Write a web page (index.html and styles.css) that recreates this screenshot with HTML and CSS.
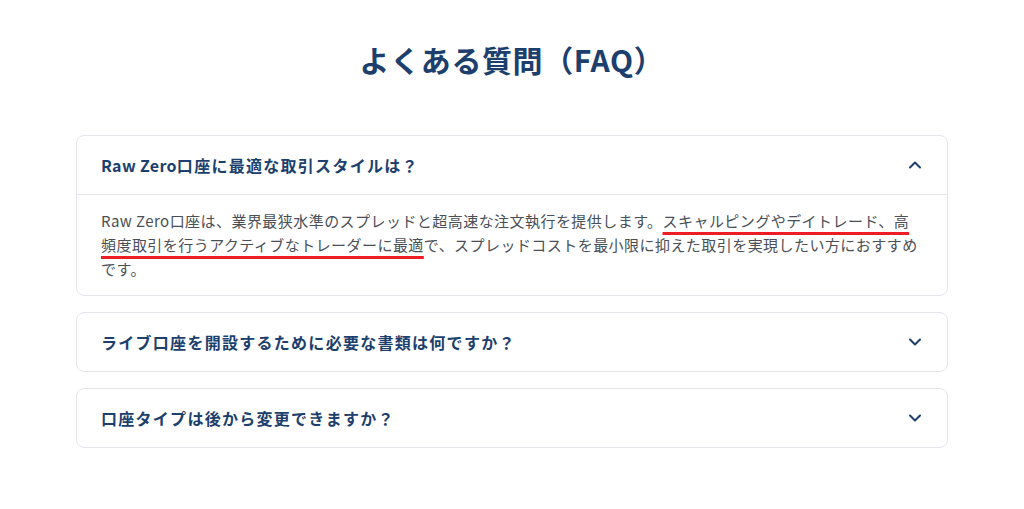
FILE: index.html
```html
<!DOCTYPE html>
<html lang="ja">
<head>
<meta charset="utf-8">
<link rel="stylesheet" href="styles.css">
</head>
<body>
<section class="faq">
  <h2 class="faq-title">よくある質問（FAQ）</h2>
  <div class="faq-list">
    <div class="faq-item open">
      <div class="faq-q">
        <span><span class="latin">Raw Zero</span>口座に最適な取引スタイルは？</span>
        <svg class="chev" width="14" height="14" viewBox="0 0 14 14"><path d="M2 9.5 L7 4.5 L12 9.5" fill="none" stroke="#1d3f6e" stroke-width="2" stroke-linecap="round" stroke-linejoin="round"/></svg>
      </div>
      <div class="faq-a">Raw Zero口座は、業界最狭水準のスプレッドと超高速な注文執行を提供します。<span class="mark">スキャルピングやデイトレード、高頻度取引を行うアクティブなトレーダーに最適</span>で、スプレッドコストを最小限に抑えた取引を実現したい方におすすめです。</div>
    </div>
    <div class="faq-item">
      <div class="faq-q">
        <span>ライブ口座を開設するために必要な書類は何ですか？</span>
        <svg class="chev" width="14" height="14" viewBox="0 0 14 14"><path d="M2 4.5 L7 9.5 L12 4.5" fill="none" stroke="#1d3f6e" stroke-width="2" stroke-linecap="round" stroke-linejoin="round"/></svg>
      </div>
    </div>
    <div class="faq-item">
      <div class="faq-q">
        <span>口座タイプは後から変更できますか？</span>
        <svg class="chev" width="14" height="14" viewBox="0 0 14 14"><path d="M2 4.5 L7 9.5 L12 4.5" fill="none" stroke="#1d3f6e" stroke-width="2" stroke-linecap="round" stroke-linejoin="round"/></svg>
      </div>
    </div>
  </div>
</section>
</body>
</html>
```
FILE: styles.css
```css
html, body {
  margin: 0;
  padding: 0;
  background: #ffffff;
}
body {
  font-family: "Noto Sans CJK JP", "Noto Sans", sans-serif;
  color: #4a4f57;
}
.faq {
  width: 872px;
  margin: 0 auto;
  padding-top: 41px;
}
.faq-title {
  margin: 0 0 58px;
  text-align: center;
  font-size: 30px;
  line-height: 36px;
  font-weight: 700;
  color: #1d3f6e;
  letter-spacing: 0.02em;
}
.faq-list {
  display: flex;
  flex-direction: column;
  gap: 16px;
}
.faq-item {
  border: 1px solid #e3e6eb;
  border-radius: 8px;
  background: #fff;
}
.faq-q {
  display: flex;
  align-items: center;
  justify-content: space-between;
  padding: 17px 25px 17px 24px;
  font-size: 16px;
  line-height: 24px;
  font-weight: 700;
  color: #1d3f6e;
  letter-spacing: 0.08em;
}
.faq-q .latin {
  letter-spacing: 0.02em;
}
.open .faq-q {
  border-bottom: 1px solid #e3e6eb;
}
.faq-a {
  padding: 14px 24px 14px;
  font-size: 15px;
  line-height: 24px;
  letter-spacing: 0.03em;
  color: #4a4f57;
}
.mark {
  text-decoration: underline;
  text-decoration-color: #ee1c25;
  text-decoration-thickness: 3px;
  text-underline-offset: 5px;
}
```
